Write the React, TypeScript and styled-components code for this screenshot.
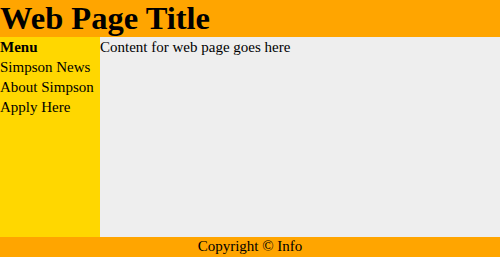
import React from "react";
import styled, { createGlobalStyle } from "styled-components";

const Global = createGlobalStyle`
  html, body { margin: 0; padding: 0; }
  body { font-family: "Liberation Serif", "Times New Roman", serif; font-size: 15px; line-height: 20px; color: #000; }
`;

const Page = styled.div`
  display: grid;
  grid-template-columns: 100px 1fr;
  grid-template-rows: 37px 200px 20px;
  width: 500px;
  height: 257px;
`;

const Header = styled.header`
  grid-column: 1 / 3;
  background: #ffa500;
`;

const Title = styled.h1`
  margin: 0;
  font-size: 32.5px;
  font-weight: bold;
  line-height: 37px;
`;

const Sidebar = styled.nav`
  background: #ffd700;
  display: flex;
  flex-direction: column;
`;

const MenuHeading = styled.div`
  font-weight: bold;
`;

const MenuItem = styled.div``;

const Content = styled.main`
  background: #eeeeee;
`;

const Footer = styled.footer`
  grid-column: 1 / 3;
  background: #ffa500;
  text-align: center;
  line-height: 18px;
`;

export default function App() {
  return (
    <>
      <Global />
      <Page>
        <Header>
          <Title>Web Page Title</Title>
        </Header>
        <Sidebar>
          <MenuHeading>Menu</MenuHeading>
          <MenuItem>Simpson News</MenuItem>
          <MenuItem>About Simpson</MenuItem>
          <MenuItem>Apply Here</MenuItem>
        </Sidebar>
        <Content>Content for web page goes here</Content>
        <Footer>Copyright © Info</Footer>
      </Page>
    </>
  );
}
